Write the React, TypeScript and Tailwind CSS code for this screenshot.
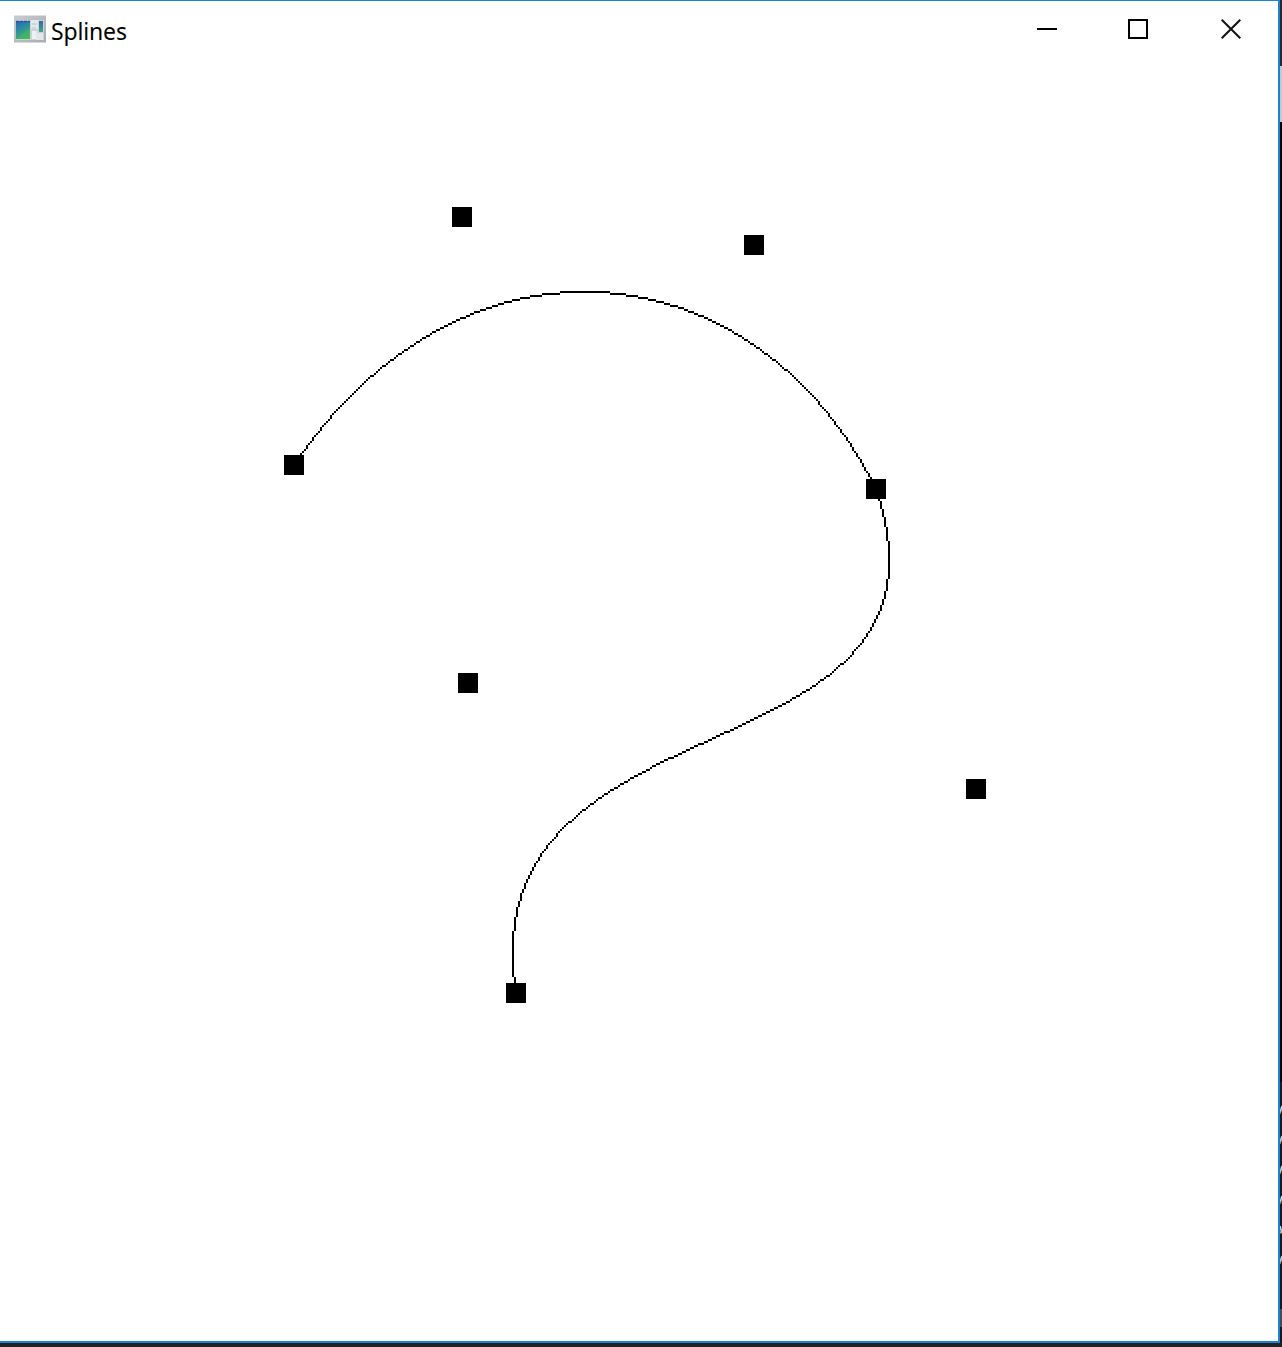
import React from "react";

type Point = [number, number];

const points: Point[] = [
  [147, 232],
  [231, 108],
  [377, 122],
  [438, 244],
  [488, 394],
  [234, 341],
  [258, 496],
];

// Each logical pixel of the canvas covers a 2x2 block on screen. The curve is
// sampled where it crosses pixel centres along its steeper axis.
function rasterize(p: Point[]): string {
  const steps = 4000;
  let d = "";
  const at = (t: number, k: 0 | 1) => {
    const u = 1 - t;
    return u * u * u * p[0][k] + 3 * u * u * t * p[1][k] + 3 * u * t * t * p[2][k] + t * t * t * p[3][k];
  };
  let px = p[0][0];
  let py = p[0][1];
  for (let i = 1; i <= steps; i++) {
    const x = at(i / steps, 0);
    const y = at(i / steps, 1);
    const steep = Math.abs(y - py) > Math.abs(x - px);
    const crossed = steep
      ? Math.floor(y - 0.5) !== Math.floor(py - 0.5)
      : Math.floor(x - 0.5) !== Math.floor(px - 0.5);
    if (crossed) {
      const cx = steep ? Math.floor(x) : Math.floor(Math.max(x, px));
      const cy = steep ? Math.floor(Math.max(y, py)) : Math.floor(y);
      d += `M${cx * 2} ${cy * 2}h2v2h-2z`;
    }
    px = x;
    py = y;
  }
  return d;
}

const curve = rasterize(points.slice(0, 4)) + rasterize(points.slice(3, 7));

function AppIcon() {
  return (
    <svg width="32" height="28" viewBox="0 0 32 28" className="shrink-0">
      <defs>
        <linearGradient id="screen" x1="0.2" y1="0" x2="0.6" y2="1">
          <stop offset="0" stopColor="#2868b4" />
          <stop offset="0.45" stopColor="#2e8fa0" />
          <stop offset="1" stopColor="#46b566" />
        </linearGradient>
        <linearGradient id="frame" x1="0" y1="0" x2="1" y2="1">
          <stop offset="0" stopColor="#c9cccf" />
          <stop offset="1" stopColor="#a9acae" />
        </linearGradient>
        <linearGradient id="bar" x1="0" y1="0" x2="0" y2="1">
          <stop offset="0" stopColor="#2f69a5" />
          <stop offset="1" stopColor="#3fa889" />
        </linearGradient>
      </defs>
      <rect x="0" y="0.5" width="32" height="27" fill="url(#frame)" />
      <rect x="2" y="5" width="28" height="20" fill="#cdd2d6" />
      <rect x="2" y="6" width="14" height="18" fill="url(#screen)" />
      <path d="M2 6.5h14" stroke="#2455a6" strokeWidth="1.5" strokeDasharray="3 1" />
      <path d="M3 24C7 21 10 16 16 13v11H3z" fill="#49b957" opacity="0.5" />
      <rect x="17" y="5" width="7" height="9" fill="#e3e8eb" />
      <path d="M18 9h5M18 13h4" stroke="#b9c3ca" />
      <rect x="25" y="6" width="4" height="11" fill="url(#bar)" />
      <rect x="18" y="16" width="5" height="8" fill="#eef1f2" />
      <rect x="22" y="18" width="7" height="7" fill="#e3e7ea" />
    </svg>
  );
}

function Controls() {
  return (
    <div className="flex h-full">
      <button aria-label="Minimize" className="flex h-14 w-[92px] items-center justify-center">
        <span className="h-0.5 w-5 bg-black" />
      </button>
      <button aria-label="Maximize" className="flex h-14 w-[90px] items-center justify-center">
        <span className="size-5 border-2 border-black" />
      </button>
      <button aria-label="Close" className="flex h-14 w-[95px] items-center justify-center">
        <svg width="20" height="20" viewBox="0 0 20 20">
          <path d="M.7.7l18.6 18.6M19.3.7L.7 19.3" stroke="#111" strokeWidth="2" />
        </svg>
      </button>
    </div>
  );
}

export default function App() {
  return (
    <div className="flex h-[1347px] w-[1282px] flex-col overflow-hidden bg-[#242122]">
      <div className="flex h-[1343px]">
        <div className="flex w-[1280px] flex-col border-t border-r-2 border-b-2 border-[#1c82d4] bg-white">
          <header className="flex h-14 items-center justify-between">
            <div className="flex items-center pl-3.5">
              <AppIcon />
              <span className="ml-[5px] pt-[3px] font-['Noto_Sans',sans-serif] text-[23px] leading-8 tracking-[-0.15px] text-black">
                Splines
              </span>
            </div>
            <Controls />
          </header>
          {/* Canvas origin sits at the window's inner top-left corner */}
          <main className="relative flex-1">
            <svg
              className="absolute -top-14 left-0"
              width="1278"
              height="1340"
              shapeRendering="crispEdges"
              pointerEvents="none"
            >
              <path d={curve} />
              {points.map(([x, y]) => (
                <rect key={`${x}-${y}`} x={x * 2 - 10} y={y * 2 - 10} width="20" height="20" />
              ))}
            </svg>
          </main>
        </div>
        <div className="flex w-0.5 flex-col bg-black">
          <span className="h-[66px] bg-[#29292b]" />
          <span className="h-14 bg-[#c8c8c8]" />
          <span className="h-[960px] bg-black" />
          <span className="flex flex-1 flex-col bg-[#19191b]">
            <svg width="2" height="200" viewBox="0 0 2 200">
              {[28, 58, 88, 118, 148, 178].map((y) => (
                <g key={y}>
                  <path d={y === 148 ? `M0 ${y - 4}l2 7` : `M0 ${y + 3}l2 -7`} stroke="#c4dce8" strokeWidth="1.6" />
                  <path d={`M0 ${y + 4}l1 -3`} stroke="#d09048" />
                </g>
              ))}
            </svg>
            <span className="mt-[27px] h-[18px] bg-[#4b4b4d]" />
          </span>
        </div>
      </div>
    </div>
  );
}
